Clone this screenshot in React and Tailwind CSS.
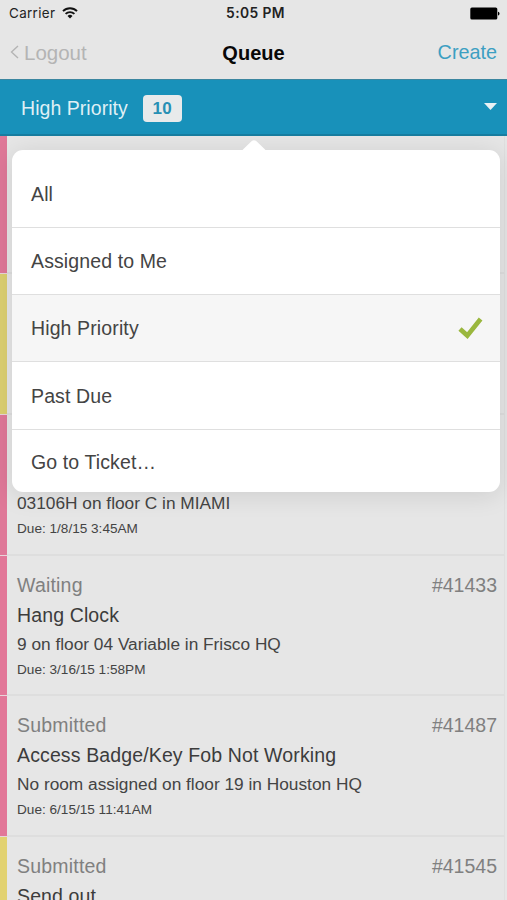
const tickets = [
  { bar: 'bg-[#df7898]', height: 'h-[138px]' },
  { bar: 'bg-[#dccf70]', height: 'h-[141px]' },
  { bar: 'bg-[#df7898]', height: 'h-[141px]', room: '03106H on floor C in MIAMI', due: 'Due: 1/8/15 3:45AM' },
  { bar: 'bg-[#e27798]', height: 'h-[140px]', status: 'Waiting', id: '#41433', title: 'Hang Clock', room: '9 on floor 04 Variable in Frisco HQ', due: 'Due: 3/16/15 1:58PM' },
  { bar: 'bg-[#e27798]', height: 'h-[141px]', status: 'Submitted', id: '#41487', title: 'Access Badge/Key Fob Not Working', room: 'No room assigned on floor 19 in Houston HQ', due: 'Due: 6/15/15 11:41AM' },
  { bar: 'bg-[#e2d271]', height: 'h-[141px]', status: 'Submitted', id: '#41545', title: 'Send out' },
];

const filters = [
  { label: 'All', row: 'h-[78px] pt-[13px] border-b' },
  { label: 'Assigned to Me', row: 'h-[67px] pt-[2px] border-b' },
  { label: 'High Priority', row: 'h-[67px] pt-[2px] border-b bg-[#f6f6f6]', checked: true },
  { label: 'Past Due', row: 'h-[68px] pt-[2px] border-b' },
  { label: 'Go to Ticket…', row: 'h-[62px] pt-[4px]' },
];

function StatusBar() {
  return (
    <div className="grid h-[27px] shrink-0 grid-cols-3 items-center pl-[9px] pr-[7px] font-['Inter',sans-serif] text-[13.4px] text-[#222]">
      <div className="flex items-center gap-[7px]">
        <span className="tracking-[0.35px]">Carrier</span>
        <svg width="16" height="12" viewBox="0 0 16 12" fill="none" stroke="#111" strokeWidth="1.9">
          <path d="M1 4.1a10 10 0 0 1 14 0" />
          <path d="M3.6 6.9a6.3 6.3 0 0 1 8.8 0" />
          <path d="M8 11.6 5.5 9a3.6 3.6 0 0 1 5 0Z" fill="#111" stroke="none" />
        </svg>
      </div>
      <span className="pl-[2px] text-center text-[13.8px] font-semibold tracking-[0.4px]">5:05 PM</span>
      <svg className="justify-self-end" width="30" height="13" viewBox="0 0 30 13">
        <rect x="0.3" y="0.5" width="27" height="12" rx="1.6" fill="#000" />
        <path d="M28 4.7c2 .3 2 3.4 0 3.7Z" fill="#000" />
      </svg>
    </div>
  );
}

function Ticket({ bar, height, status, id, title, room, due }) {
  return (
    <div className={`flex shrink-0 ${height}`}>
      <div className={`w-[7px] border-b border-[#e8d5da] ${bar}`} />
      <div className="mr-[2px] flex-1 border-b-2 border-r border-b-[#dedede] border-r-[#dfdfdf] pl-[10px] pr-[7px] pt-[14px] text-[#444]">
        <div className="flex h-[30px] justify-between text-[19.5px] leading-[30px] text-[#808080]">
          <span className="tracking-[0.2px]">{status}</span>
          <span>{id}</span>
        </div>
        <div className="h-[30px] text-[19.5px] leading-[30px] tracking-[0.13px] text-[#3c3c3c]">{title}</div>
        <div className="h-[26px] text-[17.3px] leading-[28px]">{room}</div>
        <div className="h-[24px] text-[13.6px] leading-[27px]">{due}</div>
      </div>
    </div>
  );
}

function FilterMenu() {
  return (
    <div className="absolute left-[12px] top-[150px] w-[488px]">
      <div className="overflow-hidden rounded-[11px] bg-white shadow-[0_3px_26px_rgba(0,0,0,0.11)]">
        {filters.map((f) => (
          <div key={f.label} className={`flex items-center justify-between border-[#dfdfdf] pl-[19px] pr-[17px] text-[19.5px] tracking-[0.12px] text-[#444] ${f.row}`}>
            <span>{f.label}</span>
            {f.checked && (
              <svg className="-mt-[2px]" width="25" height="23" viewBox="0 0 25 23" fill="none" stroke="#9ab73e" strokeWidth="4.7">
                <path d="M2 12 9.3 18.6 22.6 2" />
              </svg>
            )}
          </div>
        ))}
      </div>
      <svg className="absolute left-[229px] top-[-10px]" width="26" height="11" viewBox="0 0 26 11">
        <path d="M0 11 Q1.5 10 3 8.5L10.5 1.2Q13-.8 15.5 1.2L23 8.5Q24.5 10 26 11Z" fill="#fff" />
      </svg>
    </div>
  );
}

export default function App() {
  return (
    <div className="relative flex h-[900px] w-[507px] flex-col overflow-hidden bg-[#e6e6e6] font-['Liberation_Sans',Arial,sans-serif]">
      <StatusBar />
      <header className="grid h-[52px] shrink-0 grid-cols-3 items-center pl-[10px] pr-[10px] text-[20.5px]">
        <div className="flex items-center gap-[5px] text-[#b4b4b4]">
          <svg className="-mt-[2px]" width="9" height="14" viewBox="0 0 9 14" fill="none" stroke="currentColor" strokeWidth="1.4">
            <path d="M8 1 1.5 7 8 13" />
          </svg>
          <span>Logout</span>
        </div>
        <span className="text-center text-[20px] font-bold text-[#080808]">Queue</span>
        <span className="text-right text-[19.8px] text-[#3d9fc2]">Create</span>
      </header>
      <div className="flex h-[57px] shrink-0 items-center border-b-2 border-t border-b-[#177da0] border-t-[#3b86a0] bg-[#1891ba] pl-[21px] pr-[10px]">
        <span className="pt-[3px] text-[19.5px] tracking-[0.05px] text-[#dfeff5]">High Priority</span>
        <span className="ml-[15px] mt-[2px] flex h-[27px] w-[39px] items-center justify-center rounded-[4px] bg-[#e8eaeb] pt-px text-[17px] font-bold tracking-[0.3px] text-[#2790b5]">10</span>
        <svg className="-mt-[2px] ml-auto" width="13" height="7" viewBox="0 0 13 7">
          <path d="M0 0h13L6.5 7Z" fill="#e8f1f5" />
        </svg>
      </div>
      <main className="flex flex-col">
        {tickets.map((t, i) => (
          <Ticket key={i} {...t} />
        ))}
      </main>
      <FilterMenu />
    </div>
  );
}
